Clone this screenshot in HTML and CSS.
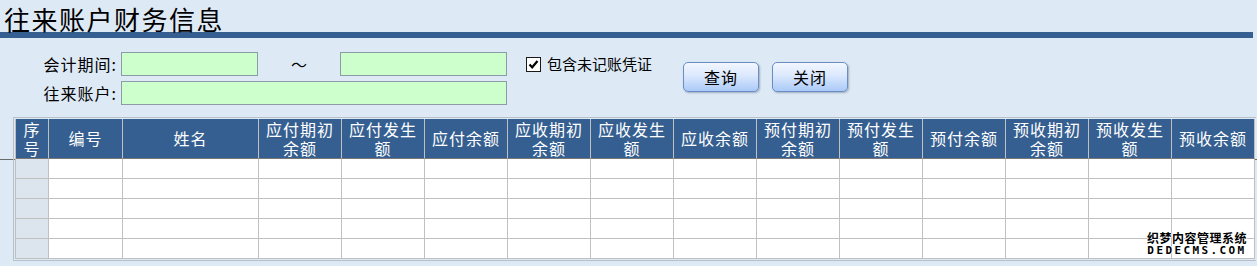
FILE: index.html
```html
<!DOCTYPE html>
<html lang="zh-CN">
  <head>
    <meta charset="UTF-8" />
    <title>往来账户财务信息</title>
    <link rel="stylesheet" href="styles.css">
  </head>
  <body>
    <h1 class="page-title">往来账户财务信息</h1>
    <div class="title-bar"></div>

    <!-- 查询条件 -->
    <form class="filter" onsubmit="return false;">
      <div class="fields">
        <label class="field-label">会计期间:</label>
        <input class="field-input" type="text">
        <span class="range-sep">～</span>
        <input class="field-input" type="text">

        <label class="field-label">往来账户:</label>
        <input class="field-input wide" type="text">
      </div>

      <label class="check">
        <span class="check-box">
          <svg width="11" height="11" viewBox="0 0 11 11">
            <path d="M1.5 5.5 L4.2 8.3 L9.5 2" fill="none" stroke="#000" stroke-width="2.2" />
          </svg>
        </span>
        包含未记账凭证
      </label>

      <div class="actions">
        <button class="btn" type="button">查询</button>
        <button class="btn" type="button">关闭</button>
      </div>
    </form>

    <!-- 账户列表 -->
    <div class="grid-section">
      <div class="grid-wrap">
        <table class="grid">
          <thead>
            <tr>
              <th class="col-idx">序号</th>
              <th class="col-code">编号</th>
              <th class="col-name">姓名</th>
              <th>应付期初余额</th>
              <th>应付发生额</th>
              <th>应付余额</th>
              <th>应收期初余额</th>
              <th>应收发生额</th>
              <th>应收余额</th>
              <th>预付期初余额</th>
              <th>预付发生额</th>
              <th>预付余额</th>
              <th>预收期初余额</th>
              <th>预收发生额</th>
              <th>预收余额</th>
            </tr>
          </thead>
          <tbody id="rows"></tbody>
        </table>
      </div>

      <div class="watermark">
        <div class="wm-cn">织梦内容管理系统</div>
        <div class="wm-en">DEDECMS.COM</div>
      </div>
    </div>

    <script>
      function renderRows() {
        const tbody = document.getElementById("rows");
        let html = "";
        for (let i = 0; i < 5; i++) {
          html += '<tr><td class="idx"></td>';
          for (let j = 0; j < 14; j++) {
            html += "<td></td>";
          }
          html += "</tr>";
        }
        tbody.innerHTML = html;
      }

      renderRows();
    </script>
  </body>
</html>
```

FILE: styles.css
```css
body {
  margin: 0;
  padding: 0;
  background-color: #dde9f5;
  font-family: "Noto Sans CJK SC", "Liberation Sans", sans-serif;
  color: #000;
  overflow: hidden;
}

.page-title {
  margin: 0;
  height: 32px;
  line-height: 38px;
  padding-left: 4px;
  font-size: 26px;
  font-weight: normal;
  letter-spacing: 1.5px;
}

.title-bar {
  height: 6px;
  margin-right: 4px;
  background-color: #365f91;
}

/* filter form */
.filter {
  display: flex;
  align-items: flex-start;
  height: 65px;
  padding-top: 14px;
  margin: 0;
}

.fields {
  display: grid;
  grid-template-columns: 121px 137px 82px 167px;
  grid-template-rows: 24px 24px;
  row-gap: 5px;
}

.field-label {
  padding-right: 4px;
  text-align: right;
  font-size: 16px;
  line-height: 24px;
  letter-spacing: 1px;
}

.field-input {
  box-sizing: border-box;
  height: 24px;
  margin: 0;
  padding: 0 3px;
  border: 1px solid #8c9ba8;
  background-color: #ccffcc;
  outline: none;
}

.field-input.wide {
  grid-column: 2 / 5;
}

.range-sep {
  text-align: center;
  font-size: 16px;
  line-height: 24px;
}

.check {
  display: flex;
  align-items: center;
  gap: 6px;
  margin-left: 19px;
  margin-top: 2px;
  font-size: 15px;
  line-height: 20px;
}

.check-box {
  box-sizing: border-box;
  width: 15px;
  height: 15px;
  border: 1px solid #1a1a1a;
  background-color: #fff;
  display: flex;
  align-items: center;
  justify-content: center;
}

.actions {
  display: flex;
  gap: 13px;
  margin-left: 31px;
  margin-top: 10px;
}

.btn {
  box-sizing: border-box;
  width: 76px;
  height: 30px;
  padding: 0;
  border: 1px solid #6a8ec4;
  border-radius: 5px;
  background: linear-gradient(#f2f7ff, #dbe8fd 45%, #abcaf8);
  box-shadow: 1px 1px 2px rgba(40, 60, 90, 0.35);
  font-family: "Noto Sans CJK SC", sans-serif;
  font-size: 16px;
  letter-spacing: 1px;
  color: #000;
  cursor: pointer;
}

/* grid */
.grid-section {
  position: relative;
  background: linear-gradient(#6b6b6b, #6b6b6b) 0 42px / 100% 1px no-repeat;
}

.grid-wrap {
  width: fit-content;
  margin-left: 13px;
  padding: 1px;
  border: 1px solid #b6c0ca;
  border-right: none;
}

.grid {
  table-layout: fixed;
  width: 1240px;
  border-collapse: separate;
  border-spacing: 0;
  border-left: 1px solid #c0c0c0;
}

.grid th,
.grid td {
  box-sizing: border-box;
  padding: 0 2px;
  border-right: 1px solid #c0c0c0;
  border-bottom: 1px solid #c0c0c0;
}

.grid th {
  width: 83px;
  height: 40px;
  background-color: #365f91;
  border-bottom-color: #777;
  color: #fff;
  font-weight: normal;
  font-size: 16px;
  line-height: 19px;
  letter-spacing: 1px;
  text-align: center;
}

.grid th.col-idx {
  width: 33px;
  padding: 0;
}

.grid th.col-code {
  width: 74px;
}

.grid th.col-name {
  width: 136px;
}

.grid td {
  height: 20px;
  background-color: #fff;
}

.grid td.idx {
  background-color: #dce4ee;
}

.watermark {
  position: absolute;
  top: 114px;
  right: 10px;
  text-align: center;
  font-weight: bold;
  color: #000;
  text-shadow: 1px 0 #fff, -1px 0 #fff, 0 1px #fff, 0 -1px #fff;
}

.wm-cn {
  font-size: 12px;
  line-height: 13px;
  letter-spacing: 0.5px;
}

.wm-en {
  font-family: "DejaVu Sans Mono", monospace;
  font-size: 11px;
  line-height: 13px;
  letter-spacing: 2.4px;
}
```
